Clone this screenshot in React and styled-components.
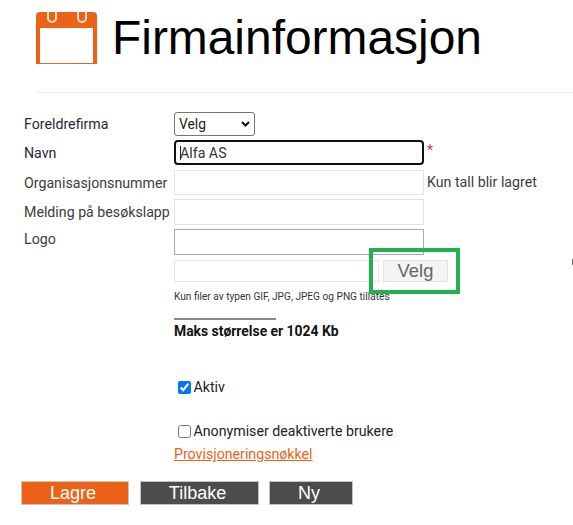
import React from "react";
import styled, { createGlobalStyle } from "styled-components";

const Global = createGlobalStyle`
  html, body { margin: 0; padding: 0; background: #fff; overflow: hidden; }
  body { font-family: Roboto, "Liberation Sans", sans-serif; color: #212529; }
`;

const Page = styled.div`
  position: relative;
  width: 573px;
  height: 525px;
  overflow: hidden;
  padding: 11px 0 0 0;
  box-sizing: border-box;
`;
const Header = styled.header`
  display: flex;
  align-items: flex-start;
  gap: 15px;
  margin-left: 36px;
  height: 82px;
  box-sizing: border-box;
  border-bottom: 1px solid #eee;
`;
const Title = styled.h1`
  margin: -1px 0 0;
  font: 400 47.9px/56px "Liberation Sans", Arial, sans-serif;
  color: #000;
  white-space: nowrap;
`;
const Form = styled.form`
  display: flex;
  flex-direction: column;
  padding: 19px 0 0 24px;
`;
const Row = styled.div`
  display: flex;
  align-items: flex-start;
  height: ${p => p.$h}px;
`;
const Label = styled.label`
  width: 150px;
  flex: none;
  font-size: 14.2px;
  line-height: ${p => p.$lh || 26}px;
  white-space: nowrap;
  color: ${p => p.$dark ? "#1f2a37" : "#3c3c3c"};
`;
const SelectWrap = styled.div`
  position: relative;
  width: 81px;
  height: 24px;
`;
const Select = styled.select`
  appearance: none;
  width: 100%;
  height: 100%;
  font: 13.8px Roboto, sans-serif;
  color: #222;
  background: #fff;
  border: 1px solid #767676;
  border-radius: 3px;
  padding: 0 0 0 4px;
`;
const Chevron = styled.svg`
  position: absolute;
  right: 5px;
  top: 9px;
  pointer-events: none;
`;
const InputWrap = styled.div`
  position: relative;
  display: flex;
`;
const Caret = styled.span`
  position: absolute;
  left: 6px;
  top: 6px;
  width: 1px;
  height: 14px;
  background: #222;
`;
const Input = styled.input`
  width: ${p => p.$w || 250}px;
  height: ${p => p.$h || 26}px;
  box-sizing: border-box;
  font: 14.2px Roboto, sans-serif;
  color: #333;
  background: #fff;
  padding: 0 4px;
  margin: 0;
  outline: none;
  border: ${p => p.$focus ? "2px solid #111" : p.$strong ? "1px solid #a9a9a9" : "1px solid #e3e3e3"};
  border-radius: ${p => p.$focus ? 4 : 0}px;
  &:focus { outline: none; }
`;
const Star = styled.span`
  color: #e33;
  font-size: 14px;
  line-height: 20px;
  margin-left: 3px;
`;
const Hint = styled.span`
  font-size: 14.2px;
  line-height: 24px;
  color: #3c3c3c;
  margin-left: 3px;
  white-space: nowrap;
`;
const Indented = styled.div`
  margin-left: 150px;
  display: flex;
  flex-direction: column;
  align-items: flex-start;
`;
const FileRow = styled.div`
  display: flex;
  gap: 4px;
  margin-top: 5px;
`;
const FileButton = styled.button`
  width: 65px;
  height: 22px;
  box-sizing: border-box;
  padding: 0;
  background: #f4f4f4;
  border: 1px solid #e3e3e3;
  color: #666;
  font: 18.4px/20px "Liberation Sans", Arial, sans-serif;
`;
const Small = styled.div`
  font-size: 10.15px;
  line-height: 14px;
  margin-top: 8px;
  color: #333;
  white-space: nowrap;
`;
const Rule = styled.div`
  width: 102px;
  height: 2px;
  background: #888;
  margin-top: 14px;
`;
const Strong = styled.div`
  font-weight: 700;
  font-size: 13.9px;
  line-height: 20px;
  margin-top: 1px;
  color: #111;
`;
const CheckRow = styled.label`
  display: flex;
  align-items: center;
  margin: ${p => p.$mt}px 0 0 4px;
  height: 20px;
  font-size: 14.2px;
  color: #222;
  white-space: nowrap;
`;
const Check = styled.input`
  width: 13px;
  height: 13px;
  margin: 0 3px 0 0;
  accent-color: #0075ff;
`;
const CheckText = styled.span`
  margin-left: -0.5px;
`;
const Link = styled.a`
  margin-top: 3px;
  font-size: 14.2px;
  line-height: 20px;
  color: #ec6318;
  text-decoration: underline;
`;
const Actions = styled.div`
  display: flex;
  margin: 17px 0 0 -3px;
`;
const Action = styled.button`
  width: ${p => p.$w}px;
  height: 24px;
  margin-right: ${p => p.$mr || 0}px;
  box-sizing: border-box;
  padding: 0 4px 0 0;
  border: 1px solid #c4c4c4;
  background: ${p => p.$primary ? "#ec6318" : "#4c4c4c"};
  color: #fff;
  font: 18px/20px "Liberation Sans", Arial, sans-serif;
`;
const Highlight = styled.div`
  position: absolute;
  left: 369px;
  top: 248px;
  width: 91px;
  height: 46px;
  box-sizing: border-box;
  border: 4px solid #22b14c;
  pointer-events: none;
`;
const EdgeMark = styled.div`
  position: absolute;
  right: 0;
  top: 259px;
  width: 1px;
  height: 6px;
  background: #777;
`;

const CalendarIcon = () => (
  <svg width="61" height="53" viewBox="0 0 61 53" aria-hidden="true" style={{ flex: "none" }}>
    <path fill="#ec6318" d="M4 1h53a4 4 0 0 1 4 4v48H0V5a4 4 0 0 1 4-4z" />
    <path fill="none" stroke="#f8e2d4" strokeWidth="2" d="M12 0v7a4 4 0 0 0 8 0V0M42 0v7a4 4 0 0 0 8 0V0" />
    <rect x="4" y="17" width="53" height="35" fill="#fff" />
  </svg>
);

export default function App() {
  return (
    <Page>
      <Global />
      <Header>
        <CalendarIcon />
        <Title>Firmainformasjon</Title>
      </Header>
      <Form onSubmit={e => e.preventDefault()}>
        <Row $h={28}>
          <Label $dark $lh={24}>Foreldrefirma</Label>
          <SelectWrap>
            <Select defaultValue="Velg"><option>Velg</option></Select>
            <Chevron width="9" height="6" viewBox="0 0 9 6" aria-hidden="true">
              <path d="M1 1l3.5 3.5L8 1" fill="none" stroke="#111" strokeWidth="2" />
            </Chevron>
          </SelectWrap>
        </Row>
        <Row $h={30}>
          <Label $dark>Navn</Label>
          <InputWrap>
            <Input $focus $h={25} defaultValue="Alfa AS" />
            <Caret />
          </InputWrap>
          <Star>*</Star>
        </Row>
        <Row $h={29}>
          <Label>Organisasjonsnummer</Label>
          <Input $h={25} />
          <Hint>Kun tall blir lagret</Hint>
        </Row>
        <Row $h={30}>
          <Label>Melding på besøkslapp</Label>
          <Input />
        </Row>
        <Row $h={26}>
          <Label $lh={20}>Logo</Label>
          <Input $strong />
        </Row>
        <Indented>
          <FileRow>
            <Input $w={205} $h={22} />
            <FileButton type="button">Velg</FileButton>
          </FileRow>
          <Small>Kun filer av typen GIF, JPG, JPEG og PNG tillates</Small>
          <Rule />
          <Strong>Maks størrelse er 1024 Kb</Strong>
          <CheckRow $mt={36}><Check type="checkbox" defaultChecked /><CheckText>Aktiv</CheckText></CheckRow>
          <CheckRow $mt={24}><Check type="checkbox" /><CheckText>Anonymiser deaktiverte brukere</CheckText></CheckRow>
          <Link href="#">Provisjoneringsnøkkel</Link>
        </Indented>
        <Actions>
          <Action $primary $w={108} $mr={11} type="button">Lagre</Action>
          <Action $w={119} $mr={10} type="button">Tilbake</Action>
          <Action $w={84} type="button">Ny</Action>
        </Actions>
      </Form>
      <Highlight />
      <EdgeMark />
    </Page>
  );
}
